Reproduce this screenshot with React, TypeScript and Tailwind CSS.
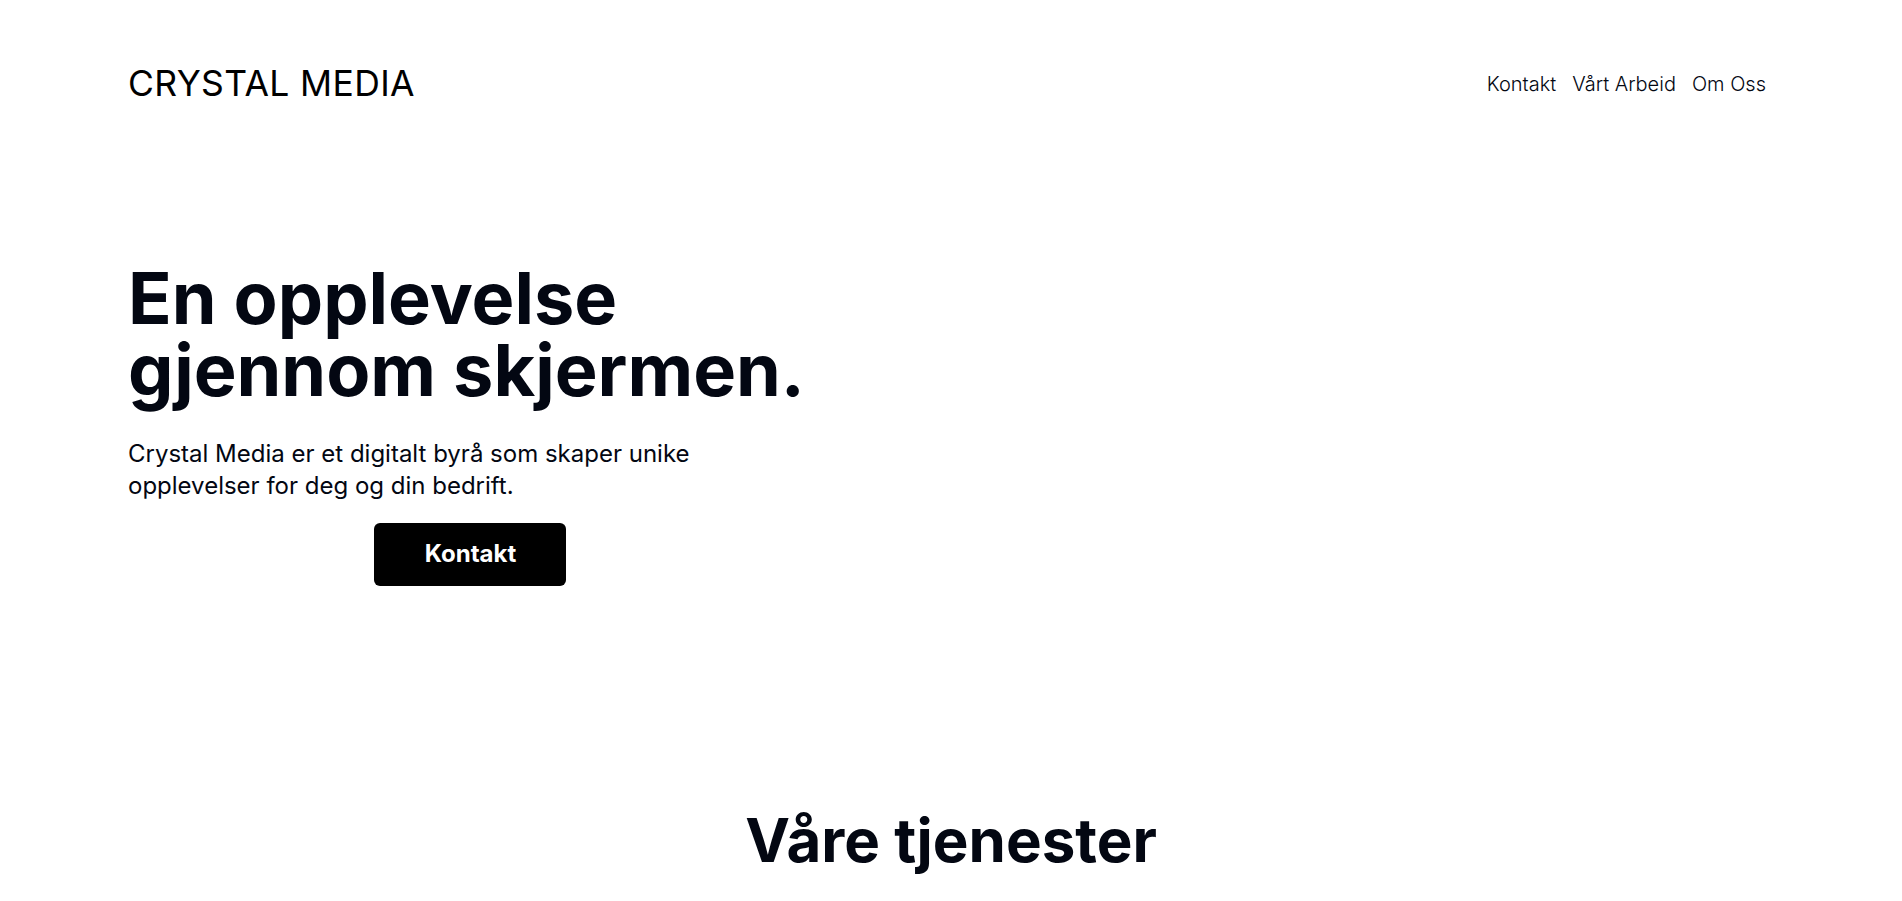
import React from "react";

export default function App() {
  return (
    <div className="min-h-screen bg-white font-['Inter',sans-serif] text-gray-950">
      <header className="flex items-center justify-between pl-32 pr-[136px] pt-[66px]">
        <div className="text-[35.5px] leading-none tracking-[0.01em] text-black">CRYSTAL MEDIA</div>
        <nav className="flex items-center gap-[16px] text-[20px] font-light text-gray-950">
          <a href="#">Kontakt</a>
          <a href="#">Vårt Arbeid</a>
          <a href="#">Om Oss</a>
        </nav>
      </header>
      <section className="px-32 pt-[160px] pb-[224px]">
        <div className="inline-flex flex-col">
          <h1 className="text-[72px] font-bold leading-none text-gray-950">
            En opplevelse
            <br />
            gjennom skjermen.
          </h1>
          <p className="mt-[32px] max-w-[600px] text-[24px] leading-[32px] text-gray-950">
            Crystal Media er et digitalt byrå som skaper unike opplevelser for deg og din bedrift.
          </p>
          <button className="mt-[21px] ml-[8px] self-center flex h-[63px] w-[192px] items-center justify-center rounded-md bg-black text-[24px] font-bold text-white">
            Kontakt
          </button>
        </div>
      </section>
      <section className="flex justify-center">
        <h2 className="text-[60px] font-bold leading-none text-gray-950">Våre tjenester</h2>
      </section>
    </div>
  );
}
